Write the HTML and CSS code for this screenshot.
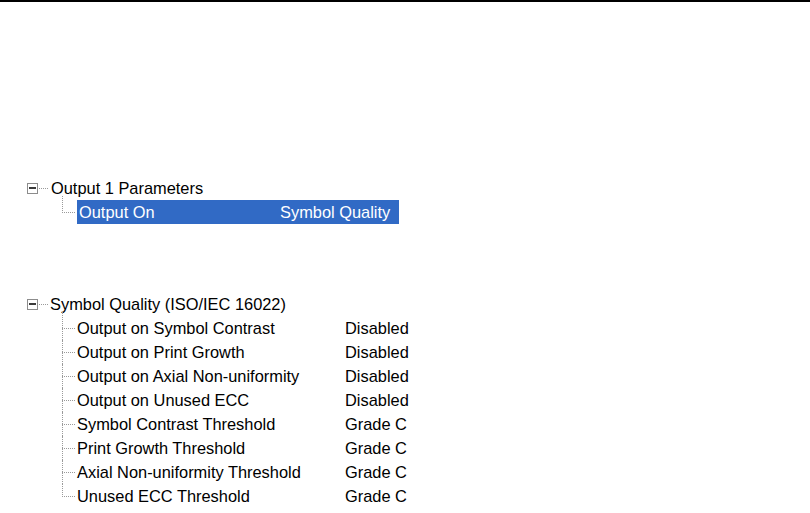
FILE: index.html
```html
<!DOCTYPE html>
<html lang="en">
<head>
<meta charset="utf-8">
<title>Symbol Quality Parameters</title>
<link rel="stylesheet" href="styles.css">
</head>
<body>
<div class="rule"></div>

<div class="tree tree-output">
  <div class="parent">
    <span class="toggle"></span>
    <span class="stub"></span>
    <span class="label">Output 1 Parameters</span>
  </div>
  <ul class="children">
    <li class="child">
      <div class="item selected">
        <span class="name">Output On</span>
        <span class="value">Symbol Quality</span>
      </div>
    </li>
  </ul>
</div>

<div class="tree tree-quality">
  <div class="parent">
    <span class="toggle"></span>
    <span class="stub"></span>
    <span class="label">Symbol Quality (ISO/IEC 16022)</span>
  </div>
  <ul class="children">
    <li class="child"><div class="item"><span class="name">Output on Symbol Contrast</span><span class="value">Disabled</span></div></li>
    <li class="child"><div class="item"><span class="name">Output on Print Growth</span><span class="value">Disabled</span></div></li>
    <li class="child"><div class="item"><span class="name">Output on Axial Non-uniformity</span><span class="value">Disabled</span></div></li>
    <li class="child"><div class="item"><span class="name">Output on Unused ECC</span><span class="value">Disabled</span></div></li>
    <li class="child"><div class="item"><span class="name">Symbol Contrast Threshold</span><span class="value">Grade C</span></div></li>
    <li class="child"><div class="item"><span class="name">Print Growth Threshold</span><span class="value">Grade C</span></div></li>
    <li class="child"><div class="item"><span class="name">Axial Non-uniformity Threshold</span><span class="value">Grade C</span></div></li>
    <li class="child"><div class="item"><span class="name">Unused ECC Threshold</span><span class="value">Grade C</span></div></li>
  </ul>
</div>
</body>
</html>
```

FILE: styles.css
```css
* {
  box-sizing: border-box;
  margin: 0;
  padding: 0;
}

body {
  margin: 0;
  background: #ffffff;
  color: #000000;
  font-family: "Liberation Sans", Arial, sans-serif;
  font-size: 16.4px;
}

.rule {
  height: 2px;
  background: #000000;
}

.tree-output {
  margin-top: 174px;
}

.tree-quality {
  margin-top: 68px;
}

.parent {
  display: flex;
  align-items: center;
  height: 24px;
  padding-left: 27px;
}

.toggle {
  position: relative;
  flex: none;
  width: 11px;
  height: 11px;
  border: 1px solid #8c8c8c;
  background: #ffffff;
}

.toggle::after {
  content: "";
  position: absolute;
  left: 1px;
  top: 3px;
  width: 7px;
  height: 2px;
  background: #3a3a3a;
}

.stub {
  flex: none;
  width: 9px;
  margin: 0 3px 0 1px;
  border-top: 1px dotted #9a9a9a;
}

.tree-quality .stub {
  margin-right: 2px;
}

.label {
  white-space: nowrap;
}

.children {
  list-style: none;
  padding-left: 76px;
}

.child {
  position: relative;
  display: flex;
  height: 24px;
}

.child::before {
  content: "";
  position: absolute;
  left: -14px;
  top: 12px;
  width: 13px;
  border-top: 1px dotted #9a9a9a;
}

.child::after {
  content: "";
  position: absolute;
  left: -14px;
  top: 0;
  bottom: 0;
  border-left: 1px dotted #9a9a9a;
}

.child:first-child::after {
  top: -4px;
}

.child:last-child::after {
  bottom: 11px;
}

.item {
  display: flex;
  align-items: center;
  height: 24px;
  padding-left: 1px;
  white-space: nowrap;
}

.tree-quality .name {
  width: 268px;
}

.tree-output .item {
  margin-left: 1px;
  padding-left: 2px;
  width: 322px;
}

.tree-output .name {
  width: 201px;
}

.selected {
  background: #316ac5;
  color: #ffffff;
}
```
